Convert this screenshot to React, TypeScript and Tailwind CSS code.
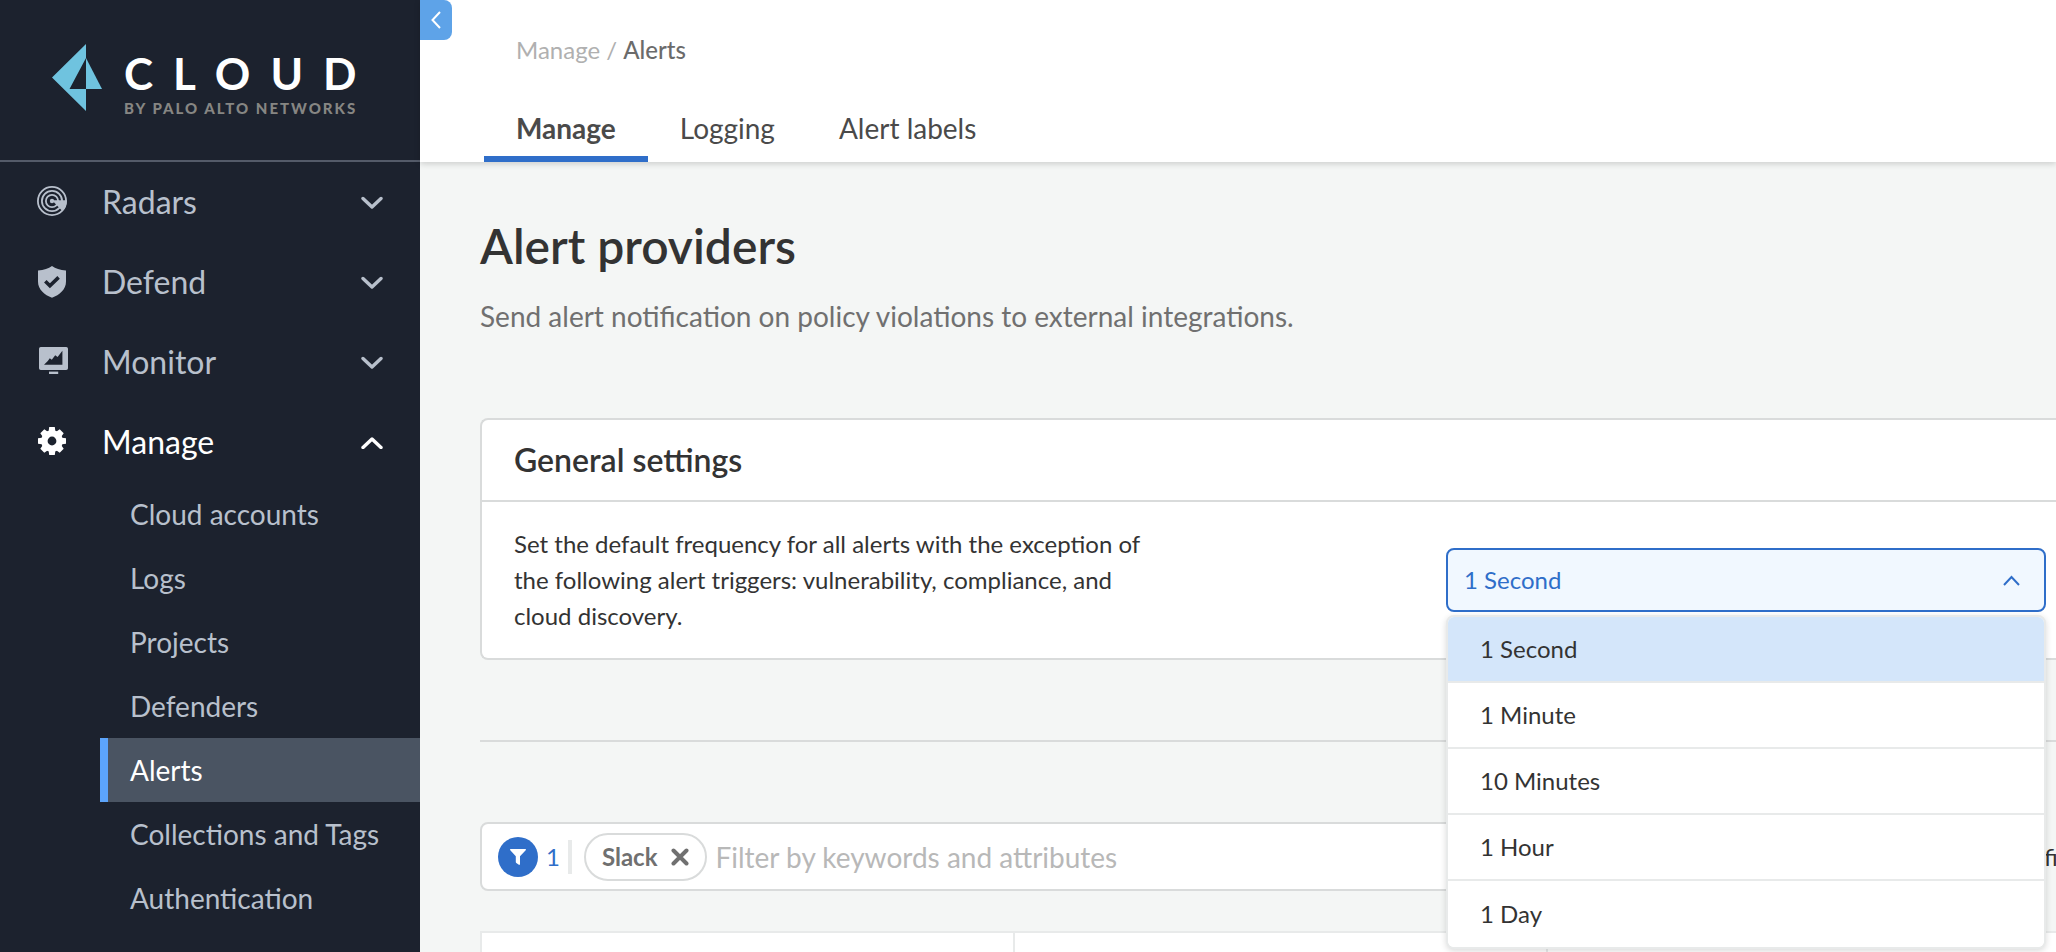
import { useState } from "react";
import type { ReactNode } from "react";

const frequencies = ["1 Second", "1 Minute", "10 Minutes", "1 Hour", "1 Day"];
const managePages = [
  "Cloud accounts",
  "Logs",
  "Projects",
  "Defenders",
  "Alerts",
  "Collections and Tags",
  "Authentication",
];

function Chevron({ up = false }: { up?: boolean }) {
  return (
    <svg viewBox="0 0 22 14" className="h-[14px] w-[22px]" fill="none" stroke="currentColor" strokeWidth="3.4" strokeLinecap="round" strokeLinejoin="round" aria-hidden="true">
      <path d={up ? "M2 12.500 11 4l9 8.500" : "M2 3.500 11 12l9-8.500"} />
    </svg>
  );
}

function RadarIcon() {
  return (
    <svg viewBox="0 0 30 32" className="h-8 w-[30px]" aria-hidden="true">
      <g fill="none" stroke="currentColor" strokeWidth="1.800">
        <circle cx="15" cy="15" r="14.100" />
        <circle cx="15" cy="15" r="10.100" />
        <circle cx="15" cy="15" r="6.100" />
      </g>
      <path d="M15 14.200h14.800c0 4.500-1.600 8.200-4.300 11Z" fill="currentColor" />
      <circle cx="15" cy="15" r="2.200" fill="currentColor" />
    </svg>
  );
}

function ShieldIcon() {
  return (
    <svg viewBox="0 0 28 32" className="h-8 w-7" aria-hidden="true">
      <path d="M14 0C10.500 2.500 6 4.100 0 4.500v11c0 8 6.500 13.600 14 16.200C21.500 29.100 28 23.500 28 15.500V4.500C22 4.100 17.500 2.500 14 0Z" fill="currentColor" />
      <path d="m7.300 15.300 4.600 4.400 8.700-8.300" fill="none" stroke="#1c222e" strokeWidth="3.600" />
    </svg>
  );
}

function MonitorIcon() {
  return (
    <svg viewBox="0 0 32 30" className="h-[30px] w-8" aria-hidden="true">
      <g transform="translate(3 0)">
        <path d="M1.800 0h25.400Q29 0 29 1.800v19.400q0 1.800-1.800 1.800H1.800Q0 23 0 21.200V1.800Q0 0 1.800 0Z" fill="currentColor" />
        <path d="M5 17.800 8.800 14l2-2.800 2 1.600 3.400-4.600 2.400 1.800L23.400 3.800v14Z" fill="#1c222e" />
        <path d="M10 24.600h9.200V27H10Z" fill="currentColor" />
      </g>
    </svg>
  );
}

function GearIcon() {
  return (
    <svg viewBox="0 0 28 30" className="h-[30px] w-7" aria-hidden="true">
      <g fill="currentColor">
        <path d="M11.200 0h5.600l.8 6h-7.200ZM10.400 22h7.200l-.8 6h-5.600Z" />
        <path d="M0 11.200v5.600l6 .8v-7.200ZM28 11.200v5.600l-6 .8v-7.200Z" />
        <path d="m2.300 6.300 4-4 5 3.500-5.500 5.500ZM21.700 2.300l4 4-3.500 5-5.500-5.500ZM25.700 21.700l-4 4-5-3.500 5.500-5.500ZM6.300 25.700l-4-4 3.500-5 5.500 5.500Z" />
      </g>
      <circle cx="14" cy="14" r="7.600" fill="none" stroke="currentColor" strokeWidth="6.400" />
    </svg>
  );
}

function NavItem({ icon, label, open = false }: { icon: ReactNode; label: string; open?: boolean }) {
  return (
    <button
      type="button"
      aria-expanded={open}
      className={`flex h-20 w-full items-center pr-[37px] pl-9 text-left text-[32px] leading-10 ${open ? "text-white" : "text-[#b8c0cc]"}`}
    >
      <span className="flex w-8 shrink-0 justify-center">{icon}</span>
      <span className="grow pl-[34px]">{label}</span>
      <Chevron up={open} />
    </button>
  );
}

function Sidebar() {
  return (
    <aside className="w-[420px] shrink-0 bg-[#1c222e]">
      <div className="flex h-[162px] items-start gap-[22px] border-b-2 border-[#545b69] pt-11 pl-[52px]">
        <svg viewBox="0 0 50 67" className="h-[67px] w-[50px] shrink-0" fill="#6fc3df" aria-hidden="true">
          <path fillRule="evenodd" d="M34 0v67L0 33.500ZM34 14 17.500 45H34Z" />
          <path d="M34 14 50 45H34Z" />
        </svg>
        <div className="pt-1 whitespace-nowrap">
          <div className="text-[44px] leading-[50px] font-bold tracking-[20px] text-white">CLOUD</div>
          <div className="text-[15px] leading-5 font-black tracking-[2px] text-[#868683]">BY PALO ALTO NETWORKS</div>
        </div>
      </div>
      <nav aria-label="Main">
        <NavItem icon={<RadarIcon />} label="Radars" />
        <NavItem icon={<ShieldIcon />} label="Defend" />
        <NavItem icon={<MonitorIcon />} label="Monitor" />
        <NavItem icon={<GearIcon />} label="Manage" open />
        <ul className="pl-[100px] text-[28px] leading-8">
          {managePages.map((page) => (
            <li key={page}>
              <a
                href="#"
                className={`flex h-16 items-center border-l-8 pl-[22px] ${page === "Alerts" ? "border-[#5ca4fb] bg-[#4a5462] text-white" : "border-transparent text-[#b8c0cc]"}`}
              >
                {page}
              </a>
            </li>
          ))}
        </ul>
      </nav>
    </aside>
  );
}

function Header() {
  return (
    <header className="relative flex h-[162px] bg-white shadow-[0_2px_6px_rgba(0,0,0,0.16)]">
      <button type="button" aria-label="Collapse sidebar" className="flex h-10 w-8 shrink-0 items-center justify-center rounded-r-lg bg-[#5ea3e8] text-white">
        <svg viewBox="0 0 10 18" className="h-[18px] w-[10px]" fill="none" stroke="currentColor" strokeWidth="2" aria-hidden="true">
          <path d="M9 1 1.500 9 9 17" />
        </svg>
      </button>
      <div className="flex flex-col justify-between pt-[34px] pl-8">
        <div className="pl-8 text-[24px] leading-8 text-[#b0b0b0]">
          <a href="#">Manage</a> / <span className="font-medium text-[#6b6b6b]">Alerts</span>
        </div>
        <nav aria-label="Alert pages" className="flex text-[28px] leading-9 text-[#4a4a4a]">
          <a href="#" className="border-b-6 border-[#2f6ec9] px-8 pb-[10px] font-bold">Manage</a>
          <a href="#" className="px-8">Logging</a>
          <a href="#" className="px-8">Alert labels</a>
        </nav>
      </div>
    </header>
  );
}

function FrequencySelect() {
  const [value, setValue] = useState("1 Second");
  const [open, setOpen] = useState(true);
  return (
    <div className="relative w-[600px] shrink-0 text-[24px] leading-8">
      <button
        type="button"
        aria-label="Default alert frequency"
        aria-expanded={open}
        onClick={() => setOpen(!open)}
        className="flex h-16 w-full items-center justify-between rounded-lg border-2 border-[#2f6ec9] bg-[#f1f8ff] pr-6 pl-4 text-[#2f6ec9]"
      >
        {value}
        <svg viewBox="0 0 17 11" className="h-[11px] w-[17px]" fill="none" stroke="currentColor" strokeWidth="2" aria-hidden="true">
          <path d="m1 10 7.500-8 7.500 8" />
        </svg>
      </button>
      {open && (
        <ul role="listbox" aria-label="Frequencies" className="absolute top-full left-0 z-10 mt-[3px] w-full overflow-hidden rounded-lg border-2 border-[#e8eaea] bg-white text-[#333333] shadow-[0_2px_6px_rgba(0,0,0,0.15)]">
          {frequencies.map((item) => (
            <li
              key={item}
              role="option"
              aria-selected={item === value}
              onClick={() => setValue(item)}
              className={`flex h-[66px] items-center border-b-2 border-[#e8eaea] pl-8 last:border-b-0 ${item === value ? "bg-[#d4e6fa]" : "bg-white"}`}
            >
              {item}
            </li>
          ))}
        </ul>
      )}
    </div>
  );
}

function FilterBar() {
  return (
    <div className="flex items-center">
      <div className="flex h-[69px] grow items-center rounded-lg border-2 border-[#d9dbdb] bg-white px-4">
        <span className="flex size-10 shrink-0 items-center justify-center rounded-full bg-[#2f6ec9] text-white">
          <svg viewBox="0 0 16 16" className="size-4" fill="currentColor" aria-hidden="true">
            <path d="M.6 0h14.800q1 .4.300 1.300L10 7.300V15q-.4 1.400-1.500.6L6.300 14q-.5-.4-.5-1V7.300L.3 1.300Q-.4.4.6 0Z" />
          </svg>
        </span>
        <span className="pl-2 text-[24px] leading-8 text-[#2f6ec9]">1</span>
        <span className="ml-2 h-[34px] w-1 bg-[#e8eaea]" />
        <button type="button" className="ml-3 flex h-12 items-center gap-[14px] rounded-full border-2 border-[#d9dbdb] px-4 text-[24px] leading-8 font-bold text-[#707070]">
          Slack
          <svg viewBox="0 0 18 18" className="size-[18px]" fill="none" stroke="currentColor" strokeWidth="4" strokeLinecap="round" aria-hidden="true">
            <path d="m2.500 2.500 13 13m0-13-13 13" />
          </svg>
        </button>
        <input
          aria-label="Filter"
          placeholder="Filter by keywords and attributes"
          className="h-9 grow pl-2 text-[28px] leading-9 text-[#333333] outline-none placeholder:text-[#b8b8b8]"
        />
      </div>
      <span className="ml-4 w-3 shrink-0 text-[24px] leading-8 whitespace-nowrap text-[#333333]">fi</span>
    </div>
  );
}

export default function App() {
  return (
    <div className="flex h-screen min-w-[1300px] overflow-hidden bg-[#f4f6f5] font-['Lato',sans-serif] text-[#333333]">
      <Sidebar />
      <div className="min-w-0 grow">
        <Header />
        <main className="pt-14 pl-[60px]">
          <h1 className="text-[48px] leading-[56px] font-semibold">Alert providers</h1>
          <p className="pt-6 text-[28px] leading-9 text-[#707070]">
            Send alert notification on policy violations to external integrations.
          </p>
          <section className="mt-[84px] rounded-l-lg border-2 border-r-0 border-[#d9dbdb] bg-white">
            <h2 className="border-b-2 border-[#d9dbdb] px-8 py-5 text-[32px] leading-10 font-semibold">General settings</h2>
            <div className="flex items-center justify-between pt-6 pr-[10px] pb-6 pl-8">
              <p className="w-[640px] text-[24px] leading-9">
                Set the default frequency for all alerts with the exception of the following alert triggers: vulnerability, compliance, and cloud discovery.
              </p>
              <FrequencySelect />
            </div>
          </section>
          <hr className="mt-20 mb-20 border-t-2 border-[#d9dbdb]" />
          <FilterBar />
          <table className="mt-10 w-full border-separate border-spacing-0 border-t-2 border-l-2 border-[#e8eaea] bg-white">
            <tbody>
              <tr className="h-20">
                <td className="w-[533px] border-r-2 border-[#e8eaea]" />
                <td className="w-[533px] border-r-2 border-[#e8eaea]" />
                <td />
              </tr>
            </tbody>
          </table>
        </main>
      </div>
    </div>
  );
}
